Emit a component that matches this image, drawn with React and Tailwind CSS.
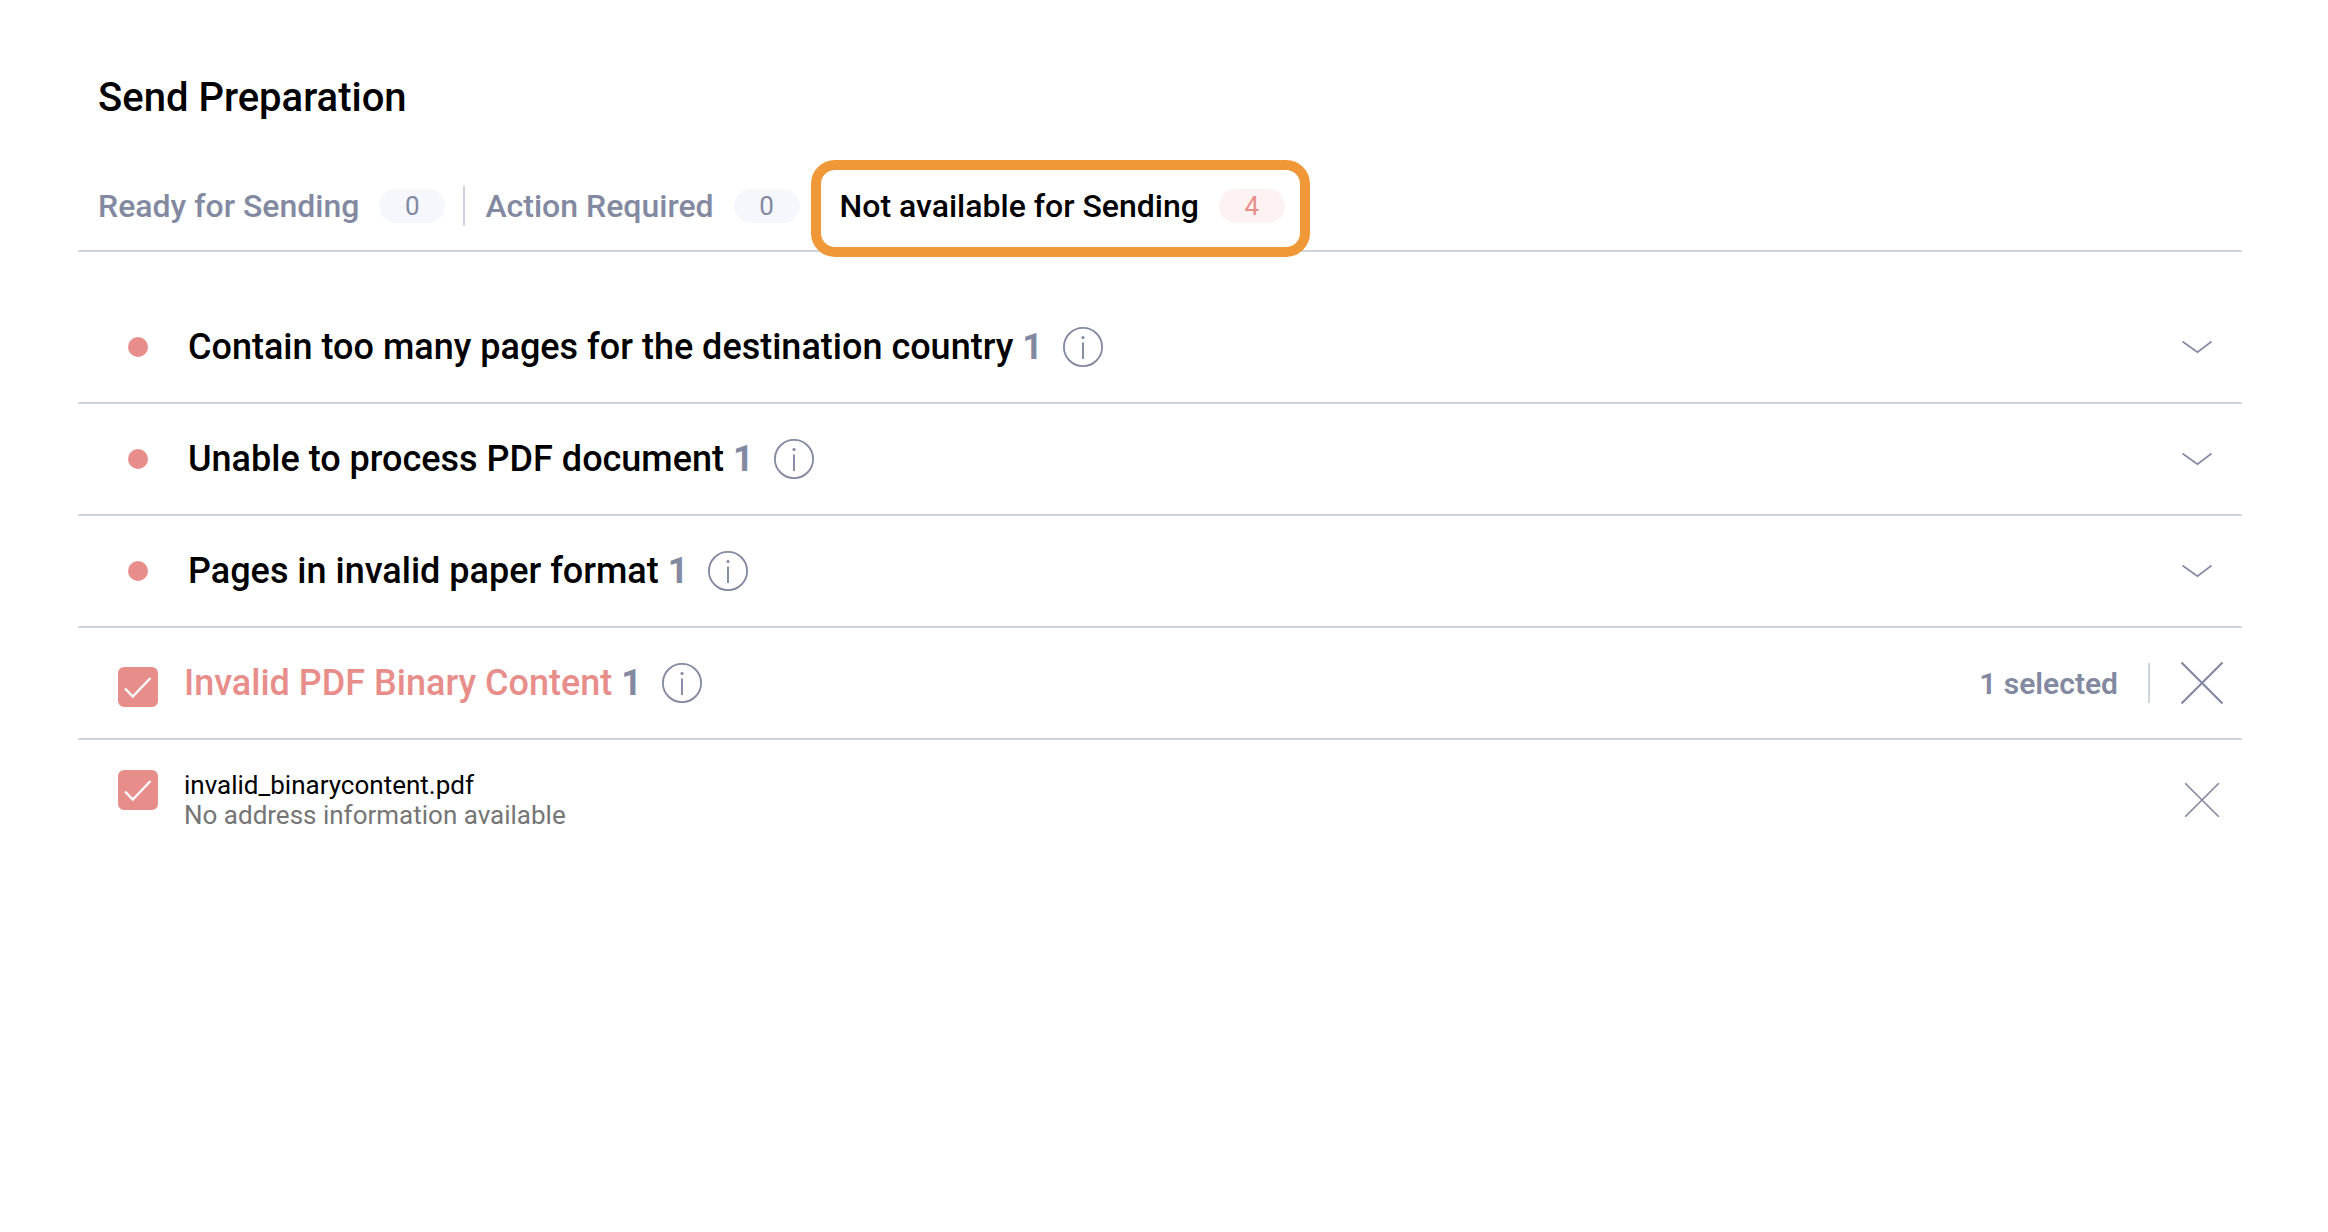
import { useState } from "react";

const tabs = [
  { id: "ready", label: "Ready for Sending", count: 0 },
  { id: "action", label: "Action Required", count: 0 },
  { id: "unavailable", label: "Not available for Sending", count: 4 },
];

const groups = [
  { id: 1, title: "Contain too many pages for the destination country", count: 1 },
  { id: 2, title: "Unable to process PDF document", count: 1 },
  { id: 3, title: "Pages in invalid paper format", count: 1 },
];

function InfoButton() {
  return (
    <button type="button" aria-label="More information" className="ml-5 shrink-0">
      <svg className="block size-10" viewBox="0 0 40 40" fill="none" stroke="#8289a1">
        <circle cx="20" cy="20" r="19.1" strokeWidth="1.8" />
        <path d="M20 15.5V32" strokeWidth="1.9" />
        <circle cx="20" cy="10.5" r="1.6" fill="#8289a1" stroke="none" />
      </svg>
    </button>
  );
}

function ChevronIcon() {
  return (
    <svg className="block h-3 w-[30px]" viewBox="0 0 30 12" fill="none" stroke="#8289a1" strokeWidth="1.7">
      <path d="M0.5 0.5L15.5 11.2L29.5 0.5" />
    </svg>
  );
}

function CloseIcon({ className, strokeWidth }) {
  return (
    <svg className={className} viewBox="0 0 44 44" fill="none" stroke="#8289a1" strokeWidth={strokeWidth}>
      <path d="M1.5 1.5L42.5 42.5M42.5 1.5L1.5 42.5" />
    </svg>
  );
}

function Checkbox({ id, checked, onChange }) {
  return (
    <span className="grid size-10 shrink-0">
      <input
        id={id}
        type="checkbox"
        checked={checked}
        onChange={onChange}
        className="peer col-start-1 row-start-1 size-10 appearance-none rounded-md border-2 border-[#e88e8a] checked:bg-[#e88e8a]"
      />
      <svg
        className="pointer-events-none invisible col-start-1 row-start-1 size-10 peer-checked:visible"
        viewBox="0 0 40 40"
        fill="none"
        stroke="white"
        strokeWidth="2.4"
      >
        <path d="M7 21.5L14.8 29.5L32.5 11" />
      </svg>
    </span>
  );
}

function App() {
  const [activeTab, setActiveTab] = useState("unavailable");
  const [selected, setSelected] = useState(true);

  const toggle = () => setSelected((prev) => !prev);

  return (
    <div className="min-h-screen bg-white pt-18 pr-[86px] pl-[78px] font-['Roboto',sans-serif]">
      <h1 className="px-5 text-[40px] leading-[52px] font-medium text-black">Send Preparation</h1>

      {/* Tabs */}
      <nav className="mt-9 flex h-23 border-b-2 border-[#d0d4dd] pl-5">
        {tabs.map((tab, index) => {
          const active = tab.id === activeTab;
          return (
            <div key={tab.id} className="flex h-23 items-center">
              {index === 1 && <span className="mr-5 ml-[18px] h-10 w-0.5 bg-[#d0d4dd]" />}
              <button
                type="button"
                onClick={() => setActiveTab(tab.id)}
                className={`flex items-center gap-5 text-[32px] font-medium whitespace-nowrap ${
                  active
                    ? "relative mt-1 ml-[11px] h-[97px] rounded-3xl border-10 border-[#f09837] bg-white pr-[15px] pb-1 pl-[19px] text-black"
                    : "text-[#8289a1]"
                }`}
              >
                {tab.label}
                <span
                  className={`flex h-[34px] w-[66px] items-center justify-center rounded-full text-[26px] font-normal ${
                    active ? "bg-[#fdf2f2] text-[#e88e8a]" : "bg-[#f6f7fc] text-[#8289a1]"
                  }`}
                >
                  {tab.count}
                </span>
              </button>
            </div>
          );
        })}
      </nav>

      <main className="pt-10">
        {groups.map((group) => (
          <div key={group.id} className="flex h-28 items-center border-b-2 border-[#d0d4dd] pr-[30px] pl-[50px]">
            <span className="mr-10 size-5 shrink-0 rounded-full bg-[#e88e8a]" />
            <h2 className="text-[36px] font-medium text-black">
              {group.title} <span className="font-bold text-[#8289a1]">{group.count}</span>
            </h2>
            <InfoButton />
            <button type="button" aria-label={`Expand ${group.title}`} className="ml-auto">
              <ChevronIcon />
            </button>
          </div>
        ))}

        {/* Opened group */}
        <div className="flex h-28 items-center border-b-2 border-[#d0d4dd] pr-[18px] pl-10">
          <div className="mr-[26px] pt-2">
            <Checkbox id="group-invalid" checked={selected} onChange={toggle} />
          </div>
          <label htmlFor="group-invalid" className="text-[36px] font-medium text-[#e88e8a]">
            Invalid PDF Binary Content <span className="font-bold text-[#8289a1]">1</span>
          </label>
          <InfoButton />
          <span className="ml-auto text-[30px] font-semibold text-[#8289a1]">{selected ? 1 : 0} selected</span>
          <span className="mr-[30px] ml-[30px] h-10 w-0.5 bg-[#d0d4dd]" />
          <button type="button" aria-label="Remove selected">
            <CloseIcon className="block size-11" strokeWidth="2.2" />
          </button>
        </div>

        <div className="flex items-start pt-[30px] pr-[22px] pl-10">
          <div className="mr-[26px]">
            <Checkbox id="file-invalid" checked={selected} onChange={toggle} />
          </div>
          <label htmlFor="file-invalid" className="text-[26px] leading-[30px] text-black">
            invalid_binarycontent.pdf
            <span className="block text-[#757575]">No address information available</span>
          </label>
          <button type="button" aria-label="Remove file" className="ml-auto self-center">
            <CloseIcon className="block size-9" strokeWidth="2" />
          </button>
        </div>
      </main>
    </div>
  );
}

export default App;
